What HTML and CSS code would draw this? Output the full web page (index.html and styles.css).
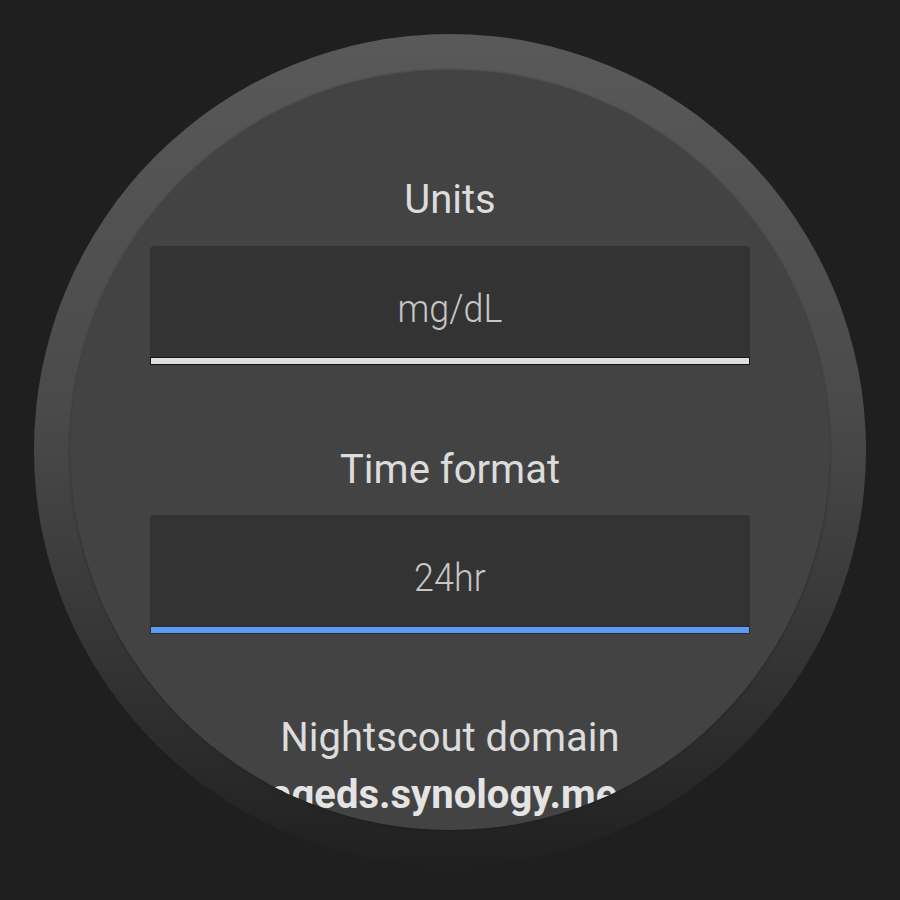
FILE: index.html
```html
<!DOCTYPE html>
<html lang="en">
<head>
<meta charset="utf-8">
<title>Watch settings</title>
<link rel="stylesheet" href="styles.css">
</head>
<body>
<div class="stage">
  <div class="bezel">
    <div class="face">
      <div class="label">Units</div>
      <div class="field">
        <div class="field-box"><span class="value">mg/dL</span></div>
        <div class="bar bar-white"></div>
      </div>
      <div class="label label-gap">Time format</div>
      <div class="field">
        <div class="field-box"><span class="value">24hr</span></div>
        <div class="bar bar-blue"></div>
      </div>
      <div class="label label-gap2">Nightscout domain</div>
      <div class="domain-row"><span class="domain">https://mageds.synology.me</span></div>
    </div>
  </div>
</div>
</body>
</html>
```
FILE: styles.css
```css
html, body {
  margin: 0;
  padding: 0;
  background: #1f1f1f;
}
.stage {
  width: 900px;
  height: 900px;
  display: flex;
  align-items: center;
  justify-content: center;
}
.bezel {
  width: 832px;
  height: 832px;
  border-radius: 50%;
  background: linear-gradient(180deg, #595959 0%, #4a4a4a 45%, #383838 70%, #202020 100%);
  display: flex;
  align-items: center;
  justify-content: center;
}
.face {
  width: 760px;
  height: 760px;
  border-radius: 50%;
  background: #434343;
  overflow: hidden;
  box-shadow: 0 0 3px rgba(0,0,0,0.35);
  display: flex;
  flex-direction: column;
  align-items: center;
  padding-top: 107px;
  box-sizing: border-box;
  font-family: Roboto, "Noto Sans", sans-serif;
}
.label {
  font-size: 40px;
  line-height: 46px;
  color: #dcdcdc;
  margin-bottom: 23px;
}
.label-gap { margin-top: 82px; margin-bottom: 22px; }
.label-gap2 { margin-top: 81px; margin-bottom: 11px; }
.field {
  width: 600px;
  display: flex;
  flex-direction: column;
}
.field-box {
  height: 111px;
  background: #333333;
  border-radius: 4px 4px 0 0;
  display: flex;
  align-items: center;
  justify-content: center;
}
.value {
  font-size: 39px;
  font-weight: 300;
  color: #c6c6c6;
  transform: scaleX(0.92);
  position: relative;
  top: 7px;
}
.bar {
  height: 6px;
  border: 1px solid #141414;
}
.bar-white { background: #dedede; }
.bar-blue { background: #5d9bf0; border-color: #262c33; }
.domain-row {
  width: 760px;
  display: flex;
  justify-content: center;
  padding-right: 176px;
  box-sizing: border-box;
}
.domain {
  white-space: nowrap;
  font-size: 40px;
  font-weight: 700;
  line-height: 46px;
  color: #e4e4e4;
}
```
